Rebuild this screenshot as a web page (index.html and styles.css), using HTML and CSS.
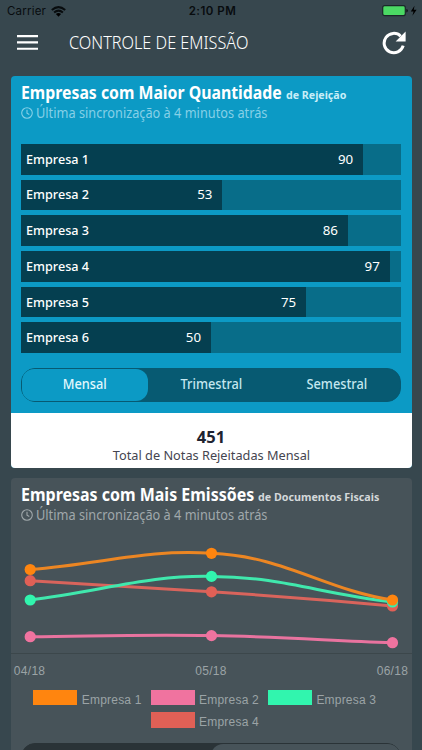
FILE: index.html
```html
<!DOCTYPE html>
<html lang="pt-BR">
<head>
<meta charset="utf-8">
<title>Controle de Emissão</title>
<link rel="stylesheet" href="styles.css">
</head>
<body>
<div class="status">
  <div class="carrier">Carrier
    <svg width="15" height="11" viewBox="0 0 15 11"><g fill="none" stroke="#080c0e" stroke-width="2"><path d="M.8 4Q7.5-1.7 14.2 4M3.1 6.5Q7.5 2.7 11.9 6.5"/></g><path d="M4.9 8Q7.5 6 10.1 8L7.5 10.7Z"/></svg>
  </div>
  <div class="time">2:10 PM</div>
  <svg class="battery" width="36" height="12" viewBox="0 0 36 12"><rect x=".7" y=".7" width="22.6" height="10" rx="2" fill="#4bd964" stroke="#1b2629" stroke-width="1.2"/><path d="M24.5 4v3.5q1.2-.5 1.2-1.8T24.5 4z"/><path d="M32.5.8 28.8 6.4h2.7l-1.1 4.4 4.2-6h-2.8z"/></svg>
</div>
<header>
  <svg width="21" height="15" viewBox="0 0 21 15"><path d="M0 1.1h21M0 7.4h21M0 13.7h21" stroke="#fff" stroke-width="2.1"/></svg>
  <h1><span class="fit">CONTROLE DE EMISSÃO</span></h1>
  <svg class="reload" width="24" height="24" viewBox="0 0 24 24"><path d="M21.2 14.7A9.7 9.7 0 1 1 18.7 5.2" fill="none" stroke="#fff" stroke-width="3"/><path d="M23.6.6V10.6H13.6Z" fill="#fff"/></svg>
</header>
<main>
  <section class="card blue">
    <div class="top">
      <h2><span class="fit t1">Empresas com Maior Quantidade</span><small class="fit s1">de Rejeição</small></h2>
      <p class="sync"><svg width="12" height="12" viewBox="0 0 12 12" fill="none" stroke="currentColor" stroke-width="1.1"><circle cx="6" cy="6" r="5.3"/><path d="M6 2.7V6.2L8.3 7.5"/></svg><span class="fit">Última sincronização à 4 minutos atrás</span></p>
      <div class="bars">
        <div class="track"><div class="bar" style="width:90%"><b>Empresa 1</b><span>90</span></div></div>
        <div class="track"><div class="bar" style="width:53%"><b>Empresa 2</b><span>53</span></div></div>
        <div class="track"><div class="bar" style="width:86%"><b>Empresa 3</b><span>86</span></div></div>
        <div class="track"><div class="bar" style="width:97%"><b>Empresa 4</b><span>97</span></div></div>
        <div class="track"><div class="bar" style="width:75%"><b>Empresa 5</b><span>75</span></div></div>
        <div class="track"><div class="bar" style="width:50%"><b>Empresa 6</b><span>50</span></div></div>
      </div>
      <div class="tabs"><div class="on"><span>Mensal</span></div><div><span>Trimestral</span></div><div><span>Semestral</span></div></div>
    </div>
    <div class="total"><strong>451</strong><span>Total de Notas Rejeitadas Mensal</span></div>
  </section>
  <section class="card gray">
    <h2><span class="fit t2">Empresas com Mais Emissões</span><small class="fit s2">de Documentos Fiscais</small></h2>
    <p class="sync"><svg width="12" height="12" viewBox="0 0 12 12" fill="none" stroke="currentColor" stroke-width="1.1"><circle cx="6" cy="6" r="5.3"/><path d="M6 2.7V6.2L8.3 7.5"/></svg><span class="fit">Última sincronização à 4 minutos atrás</span></p>
    <svg class="chart" width="401" height="125" viewBox="10.5 530 401 125">
      <path d="M10.5 653.5H411.5" stroke="#3c474b"/>
      <g fill="none" stroke-width="3">
        <path d="M29.7 580.7Q120 586 211 591.8T392 606" stroke="#d9645c"/>
        <path d="M29.7 600C102 591 148 575 211 576.4C283 577 320 594 392 602" stroke="#40e8ad"/>
        <path d="M29.7 636.7C102 636 138 634.5 211 635.6C283 637 320 640 392 642.7" stroke="#e9739f"/>
        <path d="M29.7 569.5C102 564 145 549 211 553.3C283 556 325 590 392 600" stroke="#ec8623"/>
      </g>
      <g fill="#e06056"><circle cx="29.7" cy="580.7" r="5.6"/><circle cx="211" cy="591.8" r="5.6"/><circle cx="392" cy="606" r="5.6"/></g>
      <g fill="#31f5ae"><circle cx="29.7" cy="600" r="5.6"/><circle cx="211" cy="576.4" r="5.6"/><circle cx="392" cy="602" r="5.6"/></g>
      <g fill="#f0739f"><circle cx="29.7" cy="636.7" r="5.6"/><circle cx="211" cy="635.6" r="5.6"/><circle cx="392" cy="642.7" r="5.6"/></g>
      <g fill="#ff850f"><circle cx="29.7" cy="569.5" r="5.6"/><circle cx="211" cy="553.3" r="5.6"/><circle cx="392" cy="600" r="5.6"/></g>
    </svg>
    <div class="axis"><span>04/18</span><span>05/18</span><span>06/18</span></div>
    <div class="legend">
      <div><i class="orange"></i>Empresa 1</div><div><i class="pink"></i>Empresa 2</div><div><i class="green"></i>Empresa 3</div>
      <div class="second"><i class="red"></i>Empresa 4</div>
    </div>
    <div class="tabs dark"><div></div><div class="on"></div></div>
  </section>
</main>
</body>
</html>
```
FILE: styles.css
```css
*{box-sizing:border-box}
html{height:100%;overflow:hidden}
body{margin:0;width:422px;height:750px;overflow:hidden;display:flex;flex-direction:column;background:#37474e;color:#fff;font-family:"Noto Sans","Open Sans",sans-serif}
h1,h2,p{margin:0;font-weight:400}
svg{display:block;flex:none}
.fit{display:inline-block;white-space:nowrap;transform-origin:left center}
.status{flex:none;height:22px;display:grid;grid-template-columns:1fr auto 1fr;align-items:center;padding:0 4px 0 7px;color:#080c0e;font-family:Inter,sans-serif;font-size:11.5px;letter-spacing:.2px}
.carrier{display:flex;align-items:center;gap:5px}
.time{font-weight:600;letter-spacing:.5px}
.battery{justify-self:end}
header{flex:none;height:53.5px;display:flex;align-items:center;padding:0 16px 12px 16.5px}
h1{width:180px;margin:0 0 2px 31.5px;font-size:18px;line-height:22px;font-weight:300}
h1 .fit{transform:scaleX(.903)}
.reload{margin-left:auto}
main{flex:1;min-height:0;overflow:hidden;padding:0 10.5px;display:flex;flex-direction:column;gap:10px}
.card{flex:none;border-radius:4px;overflow:hidden;height:392px}
.blue{background:#0c9ac5;display:flex;flex-direction:column}
.top{height:337px;padding:5px 10.3px 0}
h2{display:flex;align-items:baseline;height:24px;line-height:24px;font-size:17px;font-weight:700;white-space:nowrap}
.t1{width:265px;transform:scaleX(.93)}
.t2{width:237px;transform:scaleX(.94)}
small{font-size:11px;font-weight:700;color:#c8eef8}
.s1{transform:scaleX(.967)}
.s2{transform:scaleX(.974)}
.sync{display:flex;align-items:center;gap:3.3px;height:17px;line-height:15px;font-size:13.8px;color:#86d0e7;font-weight:400}
.sync .fit{height:17px;transform:scaleX(.924)}
.bars{margin-top:22.5px;display:grid;gap:5.1px}
.track{height:30.6px;background:#086d89}
.bar{height:100%;background:#053f50;display:flex;align-items:center;justify-content:space-between;padding:0 10px 1px 5px;font-size:13.3px}
.bar b{font-weight:500;transform:scaleX(.95);transform-origin:left}
.tabs{height:34.5px;margin-top:14.5px;border:1.5px solid #075a72;border-radius:14px;background:#075a72;display:grid;grid-template-columns:repeat(3,1fr);font-size:13.8px;line-height:30px;text-align:center;color:#c4e7ef;font-weight:500}
.tabs span{display:inline-block;transform:scaleX(.925)}
.on{background:#0c9ac5;border-radius:12px;color:#e2f8fd}
.total{flex:1;background:#fff;color:#202330;text-align:center;display:flex;flex-direction:column;padding-top:14px}
.total strong{font-size:16.5px;line-height:19px}
.total span{font-size:13px;line-height:18px;color:#444550;transform:scaleX(.98)}
.gray{background:#475359;padding:5px 10.3px 0}
.gray .sync{color:#a0a8ab}
.gray small{color:#d4d8da}
.chart{margin:6.5px -10.3px 0}
.axis{display:flex;justify-content:space-between;margin:9px -7px 0;font:12px/15px "Liberation Sans",Arial,sans-serif;letter-spacing:.3px;color:#9ba3a6}
.legend{display:grid;grid-template-columns:117.3px 117.3px 117.3px;margin:11px 0 0 12.5px;row-gap:7px;font:12px/15px "Liberation Sans",Arial,sans-serif;letter-spacing:.2px;color:#9ba3a6}
.legend div{display:flex;gap:4.5px;height:15.3px;white-space:nowrap;line-height:20px}
.legend i{width:44px;height:15.3px;flex:none}
.second{grid-column:2}
.orange{background:#ff850f}.pink{background:#f0739f}.green{background:#31f5ae}.red{background:#e06056}
.dark{margin-top:15px;grid-template-columns:1fr 1fr;background:#2a3337;border-color:#2a3337}
.dark .on{background:#475359}
```
